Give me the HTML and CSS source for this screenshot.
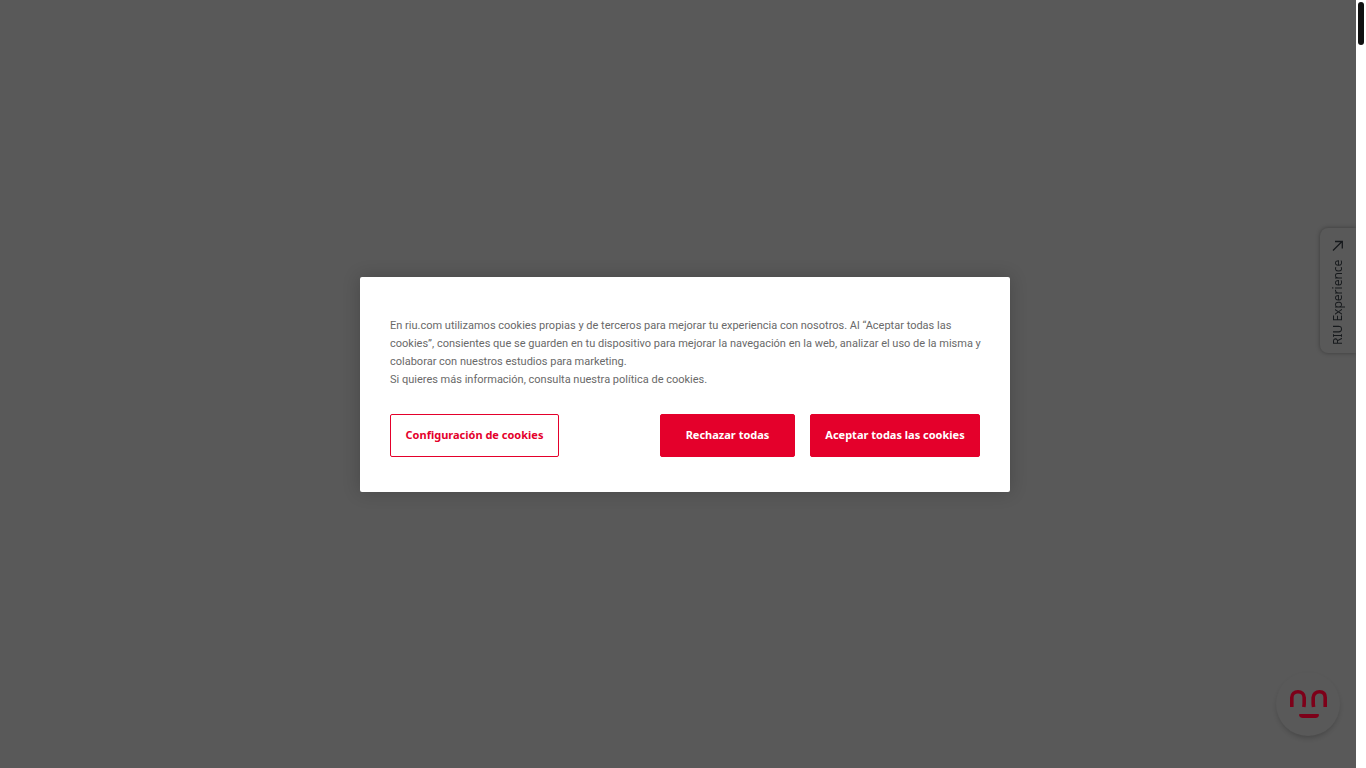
FILE: index.html
```
<!DOCTYPE html>
<html lang="es">
<head>
    <meta charset="UTF-8">
    <meta name="viewport" content="width=device-width, initial-scale=1.0">
    <title>RIU Hotels &amp; Resorts</title>
    <link rel="stylesheet" href="styles.css">
</head>
<body>
    <main class="overlay">
        <section class="cookie-dialog" role="dialog" aria-label="Cookies">
            <p class="cookie-text">
                En riu.com utilizamos cookies propias y de terceros para mejorar tu experiencia con nosotros. Al “Aceptar todas las<br>
                cookies”, consientes que se guarden en tu dispositivo para mejorar la navegación en la web, analizar el uso de la misma y<br>
                colaborar con nuestros estudios para marketing.<br>
                Si quieres más información, consulta nuestra política de cookies.
            </p>
            <div class="cookie-actions">
                <button class="btn btn-outline" type="button">Configuración de cookies</button>
                <button class="btn btn-reject" type="button">Rechazar todas</button>
                <button class="btn btn-accept" type="button">Aceptar todas las cookies</button>
            </div>
        </section>
    </main>

    <button class="experience-tab" type="button">
        <span>RIU Experience</span>
        <svg width="12" height="12" viewBox="0 0 12 12" fill="none" stroke="currentColor" stroke-width="1.3">
            <path d="M1 10.500L10 1.500M3 1.500H10.300V8.500"/>
        </svg>
    </button>

    <button class="chat-button" type="button" aria-label="Chat">
        <svg width="38" height="30" viewBox="0 0 38 30" fill="none" stroke="currentColor" stroke-width="3.6">
            <path d="M2.800 18V8.500C2.800 4.800 5.500 2.800 9 2.800S15.200 4.800 15.200 8.500V14Q15.200 16 14.800 18"/>
            <path d="M24.600 18Q24.200 16 24.200 14V8.500C24.200 4.800 27 2.800 30.500 2.800S36.200 4.800 36.200 8.500V18"/>
            <path d="M11 25H29Q30 25 30 26Q29.500 29 26.500 29H14Q10.500 29 10 26Q10 25 11 25Z" fill="currentColor" stroke="none"/>
        </svg>
    </button>

    <div class="scrollbar"><div class="scrollbar-thumb"></div></div>
</body>
</html>
```
FILE: styles.css
```
body {
    margin: 0;
    display: flex;
    min-height: 100vh;
    background-color: #595959;
    font-family: 'Noto Sans', 'Open Sans', sans-serif;
    overflow: hidden;
}

.overlay {
    flex: 1;
    display: flex;
    justify-content: center;
    align-items: center;
    padding-left: 14px;
}

.cookie-dialog {
    box-sizing: border-box;
    width: 100%;
    max-width: 650px;
    padding: 40px 30px 35px;
    background-color: #fff;
    border-radius: 2px;
    box-shadow: 0 0 18px rgba(0, 0, 0, 0.2);
}

.cookie-text {
    margin: 0 0 25px;
    color: #696969;
    font-family: Roboto, 'Open Sans', sans-serif;
    font-size: 11px;
    line-height: 18px;
    white-space: nowrap;
}

.cookie-actions {
    display: flex;
    gap: 15px;
}

.btn {
    height: 43px;
    padding: 0 8px 2px;
    border: 1px solid #e4002b;
    border-radius: 2px;
    background-color: #e4002b;
    color: #fff;
    font-family: inherit;
    font-size: 11px;
    font-weight: 700;
    white-space: nowrap;
    cursor: pointer;
}

.btn-outline {
    width: 169px;
    margin-right: auto;
    background-color: #fff;
    color: #e4002b;
}

.btn-reject {
    width: 135px;
}

.btn-accept {
    width: 170px;
}

.experience-tab {
    position: fixed;
    top: 228px;
    right: 10px;
    display: flex;
    align-items: center;
    gap: 8px;
    width: 36px;
    height: 125px;
    padding: 8px 0;
    border: none;
    border-radius: 0 8px 8px 0;
    background-color: #595959;
    box-shadow: 0 0 4px rgba(0, 0, 0, 0.35);
    color: #16191c;
    font-family: inherit;
    font-size: 12px;
    writing-mode: vertical-rl;
    transform: rotate(180deg);
    cursor: pointer;
}

.experience-tab svg {
    transform: rotate(180deg);
}

.chat-button {
    position: fixed;
    right: 26px;
    bottom: 32px;
    display: flex;
    justify-content: center;
    padding: 17px 0 0;
    width: 64px;
    height: 64px;
    border: none;
    border-radius: 50%;
    background-color: #595959;
    box-shadow: 0 3px 5px -1px rgba(0, 0, 0, 0.2);
    color: #7d0019;
    cursor: pointer;
}

.scrollbar {
    position: relative;
    z-index: 1;
    box-sizing: border-box;
    width: 10px;
    padding: 2px;
    background-color: #fff;
}

.scrollbar-thumb {
    height: 43px;
    border-radius: 3px;
    background-color: #111;
}
```
